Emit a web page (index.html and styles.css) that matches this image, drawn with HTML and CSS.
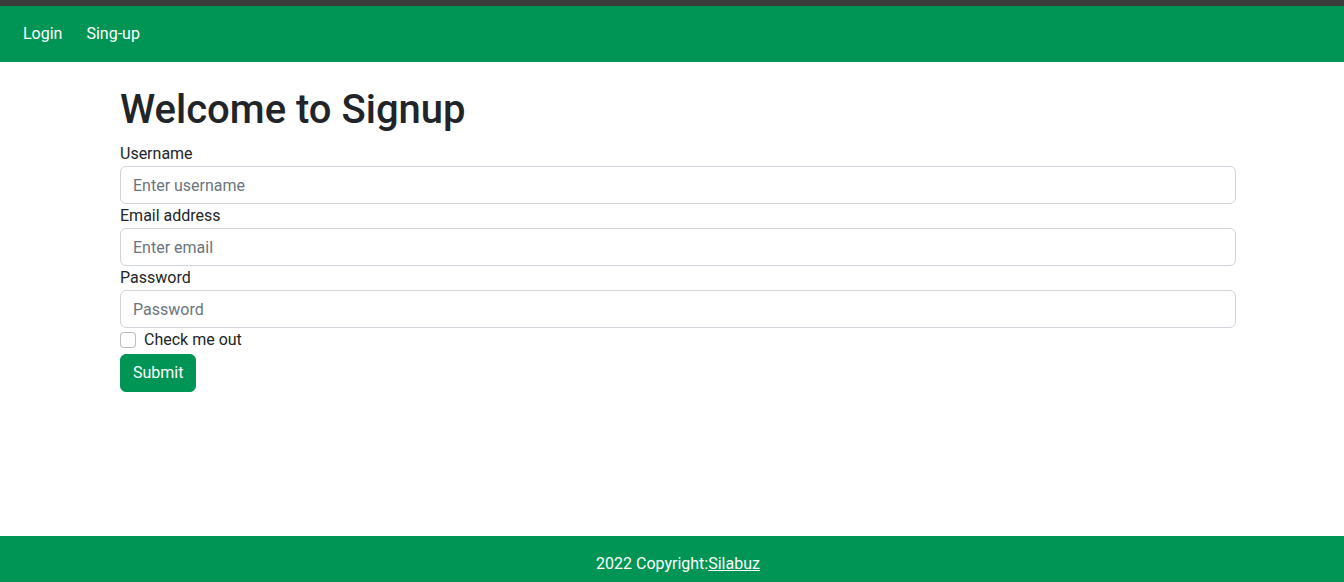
FILE: index.html
```html
<!DOCTYPE html>
<html lang="en">
<head>
<meta charset="utf-8">
<title>Signup</title>
<link rel="stylesheet" href="styles.css">
</head>
<body>
<div class="topbar"></div>
<nav class="navbar">
  <a class="nav-link" href="#">Login</a>
  <a class="nav-link" href="#">Sing-up</a>
</nav>
<main class="main">
  <div class="container">
    <h1 class="title">Welcome to Signup</h1>
    <form class="form">
      <label class="label" for="username">Username</label>
      <input class="input" id="username" type="text" placeholder="Enter username">
      <label class="label" for="email">Email address</label>
      <input class="input" id="email" type="email" placeholder="Enter email">
      <label class="label" for="password">Password</label>
      <input class="input" id="password" type="password" placeholder="Password">
      <div class="check">
        <input class="check-input" id="check" type="checkbox">
        <label class="check-label" for="check">Check me out</label>
      </div>
      <button class="btn" type="button">Submit</button>
    </form>
  </div>
</main>
<footer class="footer">2022 Copyright:<a class="footer-link" href="#">Silabuz</a></footer>
</body>
</html>
```

FILE: styles.css
```css
* { box-sizing: border-box; }
html, body { margin: 0; padding: 0; }
body {
  font-family: Roboto, "Liberation Sans", sans-serif;
  font-size: 16px;
  line-height: 24px;
  color: #212529;
  background: #fff;
  min-height: 100vh;
  display: flex;
  flex-direction: column;
}
.topbar { height: 6px; background: #3b3b3b; }
.navbar {
  height: 56px;
  background: #009455;
  display: flex;
  align-items: center;
  padding-left: 23px;
  gap: 24px;
}
.nav-link { color: #fff; text-decoration: none; font-size: 16px; }
.main { flex: 1; }
.container { margin-left: 120px; width: 1116px; padding-top: 24px; }
.title {
  margin: 0 0 8px;
  font-size: 40px;
  line-height: 48px;
  font-weight: 500;
  color: #212529;
}
.form { display: flex; flex-direction: column; align-items: flex-start; }
.label { display: block; }
.input {
  width: 100%;
  height: 38px;
  padding: 6px 12px;
  font-family: inherit;
  font-size: 16px;
  line-height: 24px;
  color: #212529;
  border: 1px solid #ced4da;
  border-radius: 6px;
  background: #fff;
  outline: none;
}
.input::placeholder { color: #6c757d; }
.check { display: flex; align-items: center; gap: 8px; height: 24px; margin-bottom: 2px; }
.check-input {
  appearance: none;
  -webkit-appearance: none;
  margin: 0;
  width: 16px;
  height: 16px;
  border: 1px solid rgba(0,0,0,.25);
  border-radius: 4px;
  background: #fff;
}
.btn {
  height: 38px;
  padding: 6px 12px;
  font-family: inherit;
  font-size: 16px;
  line-height: 24px;
  color: #fff;
  background: #009455;
  border: 1px solid #009455;
  border-radius: 6px;
}
.footer {
  background: #009455;
  color: #fff;
  text-align: center;
  padding: 16px 0 6px 12px;
  line-height: 24px;
}
.footer-link { color: #fff; text-decoration: underline; }
```
